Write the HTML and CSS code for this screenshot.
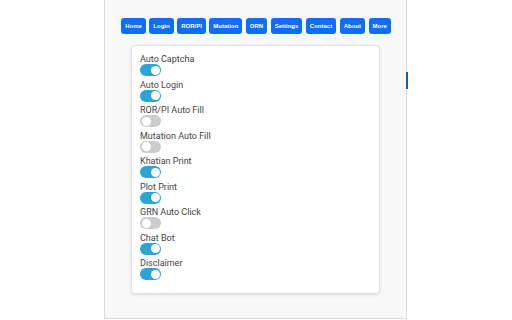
FILE: index.html
```html
<!DOCTYPE html>
<html lang="en">
<head>
    <meta charset="UTF-8">
    <title>Options</title>
    <link rel="stylesheet" href="styles.css">
</head>
<body>
    <div class="popup">
        <div class="nav">
            <button class="nav-btn">Home</button>
            <button class="nav-btn">Login</button>
            <button class="nav-btn">ROR/PI</button>
            <button class="nav-btn">Mutation</button>
            <button class="nav-btn">ORN</button>
            <button class="nav-btn">Settings</button>
            <button class="nav-btn">Contact</button>
            <button class="nav-btn">About</button>
            <button class="nav-btn">More</button>
        </div>
        <div class="card">
            <div class="setting">
                <div class="label">Auto Captcha</div>
                <span class="switch on"></span>
            </div>
            <div class="setting">
                <div class="label">Auto Login</div>
                <span class="switch on"></span>
            </div>
            <div class="setting">
                <div class="label">ROR/PI Auto Fill</div>
                <span class="switch"></span>
            </div>
            <div class="setting">
                <div class="label">Mutation Auto Fill</div>
                <span class="switch"></span>
            </div>
            <div class="setting">
                <div class="label">Khatian Print</div>
                <span class="switch on"></span>
            </div>
            <div class="setting">
                <div class="label">Plot Print</div>
                <span class="switch on"></span>
            </div>
            <div class="setting">
                <div class="label">GRN Auto Click</div>
                <span class="switch"></span>
            </div>
            <div class="setting">
                <div class="label">Chat Bot</div>
                <span class="switch on"></span>
            </div>
            <div class="setting">
                <div class="label">Disclaimer</div>
                <span class="switch on"></span>
            </div>
        </div>
        <div class="focus-mark"></div>
    </div>
</body>
</html>
```

FILE: styles.css
```css
body {
    margin: 0;
    background: #fff;
    font-family: Roboto, 'Liberation Sans', sans-serif;
}
.popup {
    position: relative;
    box-sizing: border-box;
    width: 303px;
    height: 319px;
    margin: 0 0 0 104px;
    background: #f8f8f8;
    border: 1px solid #dcdcdc;
    border-top: none;
    padding-top: 18px;
}
.nav {
    display: flex;
    justify-content: center;
    gap: 3.5px;
    padding-left: 1px;
}
.nav-btn {
    background: #0d6efd;
    color: #fff;
    border: none;
    border-radius: 3px;
    font-family: 'Liberation Sans', Arial, sans-serif;
    font-size: 6px;
    font-weight: bold;
    height: 16px;
    padding: 0 4px;
}
.card {
    box-sizing: border-box;
    width: 249px;
    margin: 11px 0 0 26px;
    background: #fff;
    border: 1px solid #e2e2e2;
    border-radius: 4px;
    box-shadow: 0 1px 3px rgba(0, 0, 0, 0.12);
    padding: 8px 8px 13px;
}
.setting {
    height: 25.5px;
}
.setting:last-child {
    height: auto;
}
.label {
    font-size: 9px;
    color: #444;
    line-height: 10px;
}
.switch {
    display: block;
    position: relative;
    width: 21px;
    height: 12px;
    border-radius: 6px;
    background: #ccc;
}
.switch::after {
    content: "";
    position: absolute;
    top: 1.5px;
    left: 1.5px;
    width: 9px;
    height: 9px;
    border-radius: 50%;
    background: #fff;
}
.switch.on {
    background: #2aa6d6;
}
.switch.on::after {
    left: 10.5px;
}
.focus-mark {
    position: absolute;
    right: -2px;
    top: 72px;
    width: 2px;
    height: 17px;
    background: #1a55c8;
}
```
